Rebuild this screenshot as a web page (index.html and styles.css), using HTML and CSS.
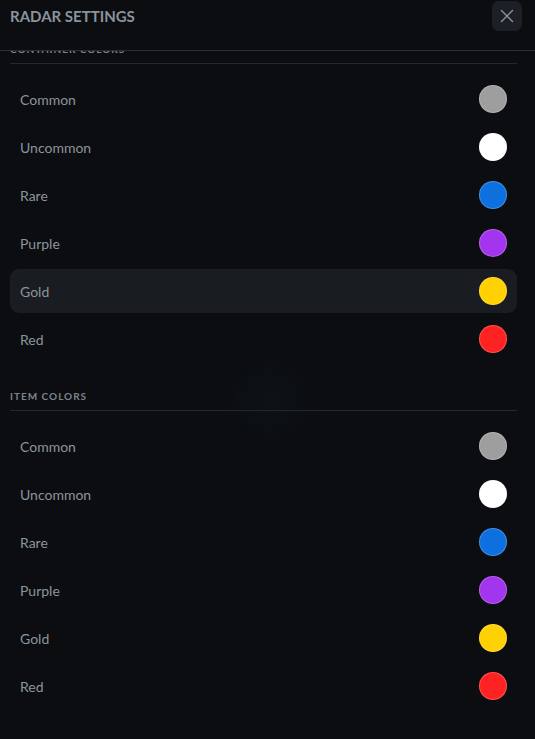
FILE: index.html
```html
<!DOCTYPE html>
<html lang="en">
<head>
    <meta charset="UTF-8">
    <meta name="viewport" content="width=device-width, initial-scale=1.0">
    <title>Radar Settings</title>
    <link rel="stylesheet" href="styles.css">
</head>
<body>
    <div class="panel">
        <div class="panel-header">
            <h1>RADAR SETTINGS</h1>
            <button class="close-btn" aria-label="Close">
                <svg width="14" height="14" viewBox="0 0 14 14">
                    <path d="M1.5 1.5 L12.5 12.5 M12.5 1.5 L1.5 12.5" stroke="#8d949c" stroke-width="1.4" stroke-linecap="round" fill="none"/>
                </svg>
            </button>
        </div>

        <div class="panel-body">
            <div class="panel-scroll">
                <div class="section">
                    <div class="section-title">CONTAINER COLORS</div>
                    <div class="color-row"><span>Common</span><span class="swatch common"></span></div>
                    <div class="color-row"><span>Uncommon</span><span class="swatch uncommon"></span></div>
                    <div class="color-row"><span>Rare</span><span class="swatch rare"></span></div>
                    <div class="color-row"><span>Purple</span><span class="swatch purple"></span></div>
                    <div class="color-row hover"><span>Gold</span><span class="swatch gold"></span></div>
                    <div class="color-row"><span>Red</span><span class="swatch red"></span></div>
                </div>

                <div class="section">
                    <div class="section-title">ITEM COLORS</div>
                    <div class="color-row"><span>Common</span><span class="swatch common"></span></div>
                    <div class="color-row"><span>Uncommon</span><span class="swatch uncommon"></span></div>
                    <div class="color-row"><span>Rare</span><span class="swatch rare"></span></div>
                    <div class="color-row"><span>Purple</span><span class="swatch purple"></span></div>
                    <div class="color-row"><span>Gold</span><span class="swatch gold"></span></div>
                    <div class="color-row"><span>Red</span><span class="swatch red"></span></div>
                </div>
            </div>
        </div>
    </div>
</body>
</html>
```

FILE: styles.css
```css
body {
    font-family: Lato, "Open Sans", sans-serif;
    background-color: #0b0d10;
    color: #8c949c;
    margin: 0;
}

.panel {
    height: 739px;
    overflow: hidden;
    background: radial-gradient(circle at 270px 400px, rgba(20, 32, 44, 0.25) 0, rgba(11, 13, 16, 0) 50px), #0b0d10;
}

.panel-header {
    position: relative;
    z-index: 1;
    height: 49px;
    padding: 1px 13px 0 10px;
    display: flex;
    justify-content: space-between;
    align-items: flex-start;
    background: #0b0d10;
    border-bottom: 1px solid #2a2e34;
}

h1 {
    margin: 0;
    font-size: 15px;
    line-height: 30px;
    font-weight: 700;
    color: #8a939d;
}

.close-btn {
    width: 30px;
    height: 30px;
    padding: 0;
    display: flex;
    align-items: center;
    justify-content: center;
    background-color: #1c2026;
    border: none;
    border-radius: 7px;
    cursor: pointer;
}

.panel-body {
    overflow: hidden;
}

.panel-scroll {
    margin-top: -9px;
    padding: 0 18px 0 10px;
}

.section + .section {
    margin-top: 28px;
}

.section-title {
    font-size: 10px;
    line-height: 14px;
    font-weight: 700;
    letter-spacing: 1px;
    color: #7c848d;
    padding-bottom: 7px;
    border-bottom: 1px solid #24282e;
    margin-bottom: 13px;
}

.color-row {
    height: 44px;
    margin-bottom: 4px;
    padding: 0 10px;
    display: flex;
    justify-content: space-between;
    align-items: center;
    border-radius: 9px;
    font-size: 14px;
    color: #8c949c;
}

.color-row.hover {
    background-color: #191c20;
}

.swatch {
    width: 28px;
    height: 28px;
    box-sizing: border-box;
    border-radius: 50%;
    border: 1px solid rgba(255, 255, 255, 0.22);
}

.swatch.common { background-color: #9e9e9e; }
.swatch.uncommon { background-color: #ffffff; }
.swatch.rare { background-color: #0d70de; }
.swatch.purple { background-color: #a335ee; }
.swatch.gold { background-color: #ffd100; }
.swatch.red { background-color: #ff2222; }
```
